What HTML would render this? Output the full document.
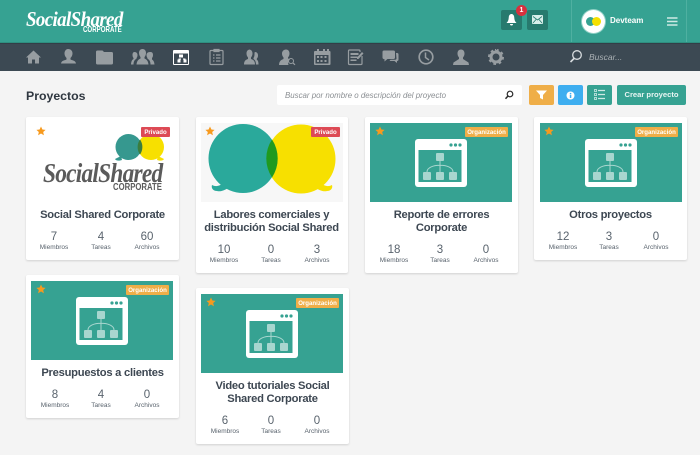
<!DOCTYPE html>
<html><head><meta charset="utf-8"><style>
html,body{margin:0;padding:0}
body{width:700px;height:455px;overflow:hidden;background:#f4f4f4;position:relative;font-family:"Liberation Sans",sans-serif;color:#3c4650}
.a{position:absolute}
.hdr{left:0;top:0;width:700px;height:43px;background:#36a292;border-bottom:1px solid #2f8f80;box-sizing:border-box}
.nav{left:0;top:43px;width:700px;height:28px;background:#3c4953;border-top:1px solid #333e47;box-sizing:border-box}
.card{position:absolute;background:#fff;border-radius:2px;box-shadow:0 1px 2px rgba(0,0,0,.14);width:153px}
.t{position:absolute;left:2px;width:149px;text-align:center;font-weight:bold;font-size:11.200px;letter-spacing:-.25px;line-height:13px;color:#3d4752;top:92px;white-space:nowrap}
.s{position:absolute;width:50px;text-align:center;margin-top:1px}
.s b{display:block;font-weight:normal;font-size:11.500px;line-height:13px;color:#59636d}
.s i{display:block;font-style:normal;font-size:6.500px;line-height:8px;color:#59636d}
.tag{position:absolute;height:10px;line-height:11px;font-size:6.100px;font-weight:bold;color:#fff;text-align:center;border-radius:1px;white-space:nowrap}
.pr{background:#dd4a55;width:29px}
.or{background:#efae48;width:43px}
.star{position:absolute}
.btn{position:absolute;top:85px;height:20px;border-radius:2px}
</style></head><body>
<svg width="0" height="0" style="position:absolute"><defs>
<symbol id="st" viewBox="0 0 20 20"><path fill="#f79a1e" d="M10 1l2.800 6 6.400.7-4.800 4.300 1.400 6.400L10 15.100l-5.800 3.300 1.400-6.400L.8 7.700 7.200 7z"/></symbol>
<symbol id="pj" viewBox="0 0 52 48"><rect x="0" y="0" width="52" height="48" rx="3" fill="#fff"/><rect x="3.500" y="11" width="43" height="32" fill="#36a292"/><circle cx="36" cy="6" r="1.600" fill="#36a292"/><circle cx="40.500" cy="6" r="1.600" fill="#36a292"/><circle cx="45" cy="6" r="1.600" fill="#36a292"/><path d="M25 22v11M12 33c0-9 26-9 26 0" fill="none" stroke="#a8d6cf" stroke-width="1"/><rect x="21" y="14" width="8" height="8" rx="1" fill="#a8d6cf"/><rect x="8" y="33" width="8" height="8" rx="1" fill="#a8d6cf"/><rect x="21" y="33" width="8" height="8" rx="1" fill="#a8d6cf"/><rect x="34" y="33" width="8" height="8" rx="1" fill="#a8d6cf"/></symbol>
<symbol id="pc" viewBox="0 0 142 79"><rect width="142" height="79" fill="#36a292"/><use href="#pj" x="45" y="16" width="52" height="48"/></symbol>
</defs></svg>

<div class="a hdr"></div>
<div class="a" style="left:26px;top:7px;font:italic bold 21.500px/24px 'Liberation Serif',serif;color:#fff;letter-spacing:-.7px;transform:scaleX(.88);transform-origin:left top;white-space:nowrap">SocialShared</div>
<div class="a" style="left:83px;top:25px;font:bold 8.300px/9px 'Liberation Sans',sans-serif;color:#fff;transform:scaleX(.74);transform-origin:left top;white-space:nowrap">CORPORATE</div>
<div class="a" style="left:501px;top:10px;width:21px;height:20px;background:#277a6e;border-radius:2px"></div>
<svg class="a" style="left:506px;top:14px" width="11" height="12" viewBox="0 0 11 12"><path fill="#fff" d="M5.500 0C7 0 8 1.200 8.200 3c.2 3 .8 4.500 2.300 6H.5C2 7.500 2.600 6 2.800 3 3 1.200 4 0 5.500 0zM4 10h3a1.500 1.500 0 0 1-3 0z"/></svg>
<div class="a" style="left:516px;top:5px;width:11px;height:11px;border-radius:50%;background:#d8303e;color:#fff;font:bold 7px/11px 'Liberation Sans',sans-serif;text-align:center">1</div>
<div class="a" style="left:527px;top:10px;width:21px;height:20px;background:#277a6e;border-radius:2px"></div>
<svg class="a" style="left:532px;top:15px" width="11" height="9" viewBox="0 0 11 9"><rect width="11" height="9" rx="1" fill="#d8efeb"/><path d="M1 1.500l4.500 3.500 4.500-3.500M1 8l3-3.500M10 8L7 4.500" fill="none" stroke="#277a6e" stroke-width=".8"/></svg>
<div class="a" style="left:571px;top:0;width:1px;height:42px;background:#4fb0a1"></div>
<div class="a" style="left:686px;top:0;width:1px;height:42px;background:#4fb0a1"></div>
<div class="a" style="left:582px;top:10px;width:23px;height:23px;border-radius:50%;background:#fff;box-shadow:0 0 0 1px #8fd0c5"></div>
<div class="a" style="left:586px;top:17px;width:9px;height:9px;border-radius:50%;background:#36a292"></div>
<div class="a" style="left:592px;top:17px;width:9px;height:9px;border-radius:50%;background:#f5e000"></div>
<div class="a" style="left:610px;top:15px;font:bold 8px/12px 'Liberation Sans',sans-serif;color:#fff">Devteam</div>
<svg class="a" style="left:667px;top:17px" width="11" height="9"><path d="M0 1h10.500M0 4.500h10.500M0 8h10.500" stroke="#cfe9e4" stroke-width="1.400"/></svg>

<div class="a nav"></div>
<svg class="a" style="left:0;top:44px" width="700" height="27" viewBox="0 44 700 27" fill="#979da1">
<path d="M26 57.500l7.500-7 7.500 7h-2v6h-4v-4h-3v4h-4v-6z"/>
<path d="M68 49c3 0 4.500 2 4.500 4.500 0 2-1 3.500-2 4.500v1.500c2 1 5 1 5.500 4H61c.5-3 3.500-3 5.500-4V58c-1-1-2-2.500-2-4.500C64.500 51 66 49 68 49z"/>
<path d="M96 52q0-1.500 1.500-1.500h5l1.500 1.500h7.500q1.500 0 1.500 1.500V63q0 1.500-1.500 1.500h-14q-1.500 0-1.500-1.500z"/>
<path d="M142.500 49c2.500 0 3.500 2 3.500 4s-1 3.500-1.500 4v1.500c2 1 3.500 2 4 6h-12c.5-4 2-5 4-6V57c-.5-.5-1.500-2-1.500-4s1-4 3.500-4zM134.500 52c2 0 3 1.500 3 3s-.5 2.500-1 3v.8l-1.500 1c-.8 1-1.500 2.500-1.500 4.700H131c.2-3 1-4.800 2.500-5.500V58c-.5-.5-1-1.500-1-3s.5-3 2-3zM150.500 52c2 0 2.500 1.500 2.500 3s-.5 2.500-1 3v1.500c1.500.7 2.300 2.500 2.500 5h-4c0-2.200-.7-3.700-1.500-4.700l-1.500-1V58c-.5-.5-1-1.500-1-3s1-3 3.500-3z"/>
<path fill="none" stroke="#979da1" stroke-width="1.200" d="M211 50.500h11a1 1 0 0 1 1 1v12a1 1 0 0 1-1 1h-11a1 1 0 0 1-1-1v-12a1 1 0 0 1 1-1zM214 49.500h5v2h-5zM213 55h1.500M216 55h4.500M213 58h1.500M216 58h4.500M213 61h1.500M216 61h4.500"/>
<path d="M249 49.500c2.500 0 3.500 2 3.500 4s-.8 3-1.500 4v1.500c2 .8 4 1.500 4 5.500h-11c0-4 2-4.700 4-5.500v-1.500c-.7-1-1.500-2-1.500-4s1-4 3.500-4zM255 52c2 0 3 1.500 3 3.500s-.8 2.500-1.200 3.200v1c1 .5 1.700 1.500 1.700 4.800H256c0-3-1-4.500-2.500-5.500v-1c.6-1 1-2 1-3.500 0-1 0-2.500.5-2.500z"/>
<path d="M286 49.500c2.500 0 3.500 2 3.500 4s-.8 3-1.500 4v1c1 .4 1.500.7 2 1a5 5 0 0 0-1.500 5.500H279c.2-4 2-5 4.500-6v-1.500c-.7-1-1.500-2-1.500-4s1.500-4 4-4z"/>
<circle cx="291" cy="61" r="2.500" fill="none" stroke="#979da1" stroke-width="1"/><path d="M293 63l2 1.800" stroke="#979da1" stroke-width="1.200"/>
<path fill-rule="evenodd" d="M315 51h2v-2h2v2h4v-2h2v2h2v-2h2v2h.5a1 1 0 0 1 1 1v12a1 1 0 0 1-1 1H315a1 1 0 0 1-1-1V52a1 1 0 0 1 1-1zM315.500 55v8.500h13V55zM317 56h2v2h-2zM320.500 56h2v2h-2zM324.500 56h2v2h-2zM317 60h2v2h-2zM320.500 60h2v2h-2zM324.500 60h2v2h-2z"/>
<path fill="none" stroke="#979da1" stroke-width="1.200" d="M360 52v-1a1 1 0 0 0-1-1h-9.500a1 1 0 0 0-1 1v12.500a1 1 0 0 0 1 1H361a1 1 0 0 0 1-1V56"/>
<path d="M350.500 53h8v2h-8zM350.500 56.500h7v1.500h-7zM350.500 59.500h6v1.500h-6zM362 52l1.500 1.500-5 5.500h-1.500v-1.500z"/>
<path d="M384 50.500h9.500a1.500 1.500 0 0 1 1.500 1.500v5.500a1.500 1.500 0 0 1-1.500 1.500h-6l-3 2.500V59a1.500 1.500 0 0 1-2-1.500V52a1.500 1.500 0 0 1 1.500-1.500z"/>
<path d="M396 53h1a1.500 1.500 0 0 1 1.500 1.500v5a1.500 1.500 0 0 1-1.500 1.500v2l-2.500-2h-5l1-1.200h5a1.500 1.500 0 0 0 1-1.300z"/>
<circle cx="426" cy="57" r="6.800" fill="none" stroke="#979da1" stroke-width="1.700"/><path d="M425.500 52.500v5l3.500 2.500" fill="none" stroke="#979da1" stroke-width="1.500"/>
<path d="M461 49.500c2.500 0 3.500 2 3.500 4s-.8 3-1.500 4v1.500l5.500 3.500.5 2.500h-16l.5-2.500 5.500-3.500v-1.500c-.7-1-1.500-2-1.500-4s1-4 3.500-4z"/>
<circle cx="496" cy="57" r="5" fill="none" stroke="#979da1" stroke-width="3"/><circle cx="496" cy="57" r="7" fill="none" stroke="#979da1" stroke-width="2" pathLength="16" stroke-dasharray="1 1"/>
<rect x="173" y="50" width="16" height="15" rx="1" fill="#fff"/><rect x="174" y="53.500" width="14" height="10.500" fill="#3c4953"/><path d="M179 54.500h4v3h-1.500v1h4v1h1v3h-3v-3h-.5v-1h-2v1h-.5v3h-3v-3h1v-1h3v-1H179z" fill="#fff"/>
<circle cx="577" cy="55" r="4.300" fill="none" stroke="#d8dcdf" stroke-width="1.300"/><path d="M574 58.500l-3.500 3.500" stroke="#d8dcdf" stroke-width="1.600"/>
</svg>
<div class="a" style="left:589px;top:51px;font:italic 8.500px/12px 'Liberation Sans',sans-serif;color:#aab0b4">Buscar...</div>

<div class="a" style="left:26px;top:88px;font:bold 12.300px/16px 'Liberation Sans',sans-serif;color:#2f3740">Proyectos</div>
<div class="a" style="left:277px;top:85px;width:245px;height:20px;background:#fff;border-radius:2px"></div>
<div class="a" style="left:285px;top:90px;font:italic 7.900px/11px 'Liberation Sans',sans-serif;color:#8b8f93">Buscar por nombre o descripción del proyecto</div>
<svg class="a" style="left:504px;top:90px" width="10" height="10"><circle cx="6" cy="4" r="2.800" fill="none" stroke="#2b2b2b" stroke-width="1.200"/><path d="M4 6L1.500 8.700" stroke="#2b2b2b" stroke-width="1.500"/></svg>
<div class="btn" style="left:529px;width:25px;background:#efae48"></div>
<svg class="a" style="left:536px;top:90px" width="11" height="10"><path d="M0 .5h11L7 5v4.500L4 8V5z" fill="#fff"/></svg>
<div class="btn" style="left:558px;width:25px;background:#3eaef0"></div>
<svg class="a" style="left:566px;top:91px" width="9" height="9"><circle cx="4.500" cy="4.500" r="4" fill="#fff"/><rect x="3.800" y="3.700" width="1.500" height="3.300" fill="#3eaef0"/><rect x="3.800" y="1.900" width="1.500" height="1.200" fill="#3eaef0"/></svg>
<div class="btn" style="left:587px;width:25px;background:#36a292"></div>
<svg class="a" style="left:594px;top:89px" width="11" height="12"><path d="M4 1.500h7M4 5.500h7M4 9.500h7" stroke="#cfe9e4" stroke-width="1.200"/><rect x=".5" y=".5" width="2" height="2" fill="none" stroke="#cfe9e4" stroke-width=".8"/><rect x=".5" y="4.500" width="2" height="2" fill="none" stroke="#cfe9e4" stroke-width=".8"/><rect x=".5" y="8.500" width="2" height="2" fill="none" stroke="#cfe9e4" stroke-width=".8"/></svg>
<div class="btn" style="left:617px;width:69px;background:#36a292;color:#e8f5f3;font:bold 7.600px/20px 'Liberation Sans',sans-serif;text-align:center">Crear proyecto</div>

<!-- 1 -->
<div class="card" style="left:26px;top:117px;height:143px">
<svg class="a" style="left:0;top:0" width="153" height="60" viewBox="26 117 153 60"><circle cx="151" cy="147" r="13" fill="#f7e000"/><path d="M158 156l6 3c-1 2-4 2-7 1z" fill="#f7e000"/><circle cx="128.500" cy="147" r="13" fill="#36988f"/><path d="M121 156l-6 3c1 2 4 2 7 1z" fill="#36988f"/><path d="M140 139.500a13 13 0 0 1 0 15 13 13 0 0 1 0-15z" fill="#3a7d3e"/></svg>
<div class="a" style="left:17px;top:40px;font:italic bold 27.500px/32px 'Liberation Serif',serif;color:#5b5b5b;letter-spacing:-.9px;white-space:nowrap;transform:scaleX(.85);transform-origin:left top">SocialShared</div>
<div class="a" style="left:87px;top:65px;font:bold 9.800px/11px 'Liberation Sans',sans-serif;color:#5b5b5b;white-space:nowrap;transform:scaleX(.79);transform-origin:left top">CORPORATE</div>
<svg class="star" width="10" height="10" style="left:10px;top:9px"><use href="#st"/></svg>
<div class="tag pr" style="top:10px;right:9px">Privado</div>
<div class="t">Social Shared Corporate</div>
<div class="s" style="left:3px;top:113px"><b>7</b><i>Miembros</i></div>
<div class="s" style="left:50px;top:113px"><b>4</b><i>Tareas</i></div>
<div class="s" style="left:96px;top:113px"><b>60</b><i>Archivos</i></div>
</div>

<!-- 2 -->
<div class="card" style="left:196px;top:117px;height:156px;width:152px">
<div class="a" style="left:5px;top:6px;width:142px;height:79px;background:#f7f7f7"></div>
<svg class="a" style="left:0;top:0" width="152" height="90" viewBox="196 117 152 90"><circle cx="301" cy="159" r="34.500" fill="#f7e000"/><path d="M322 184c3 2 6 3 10 1 1 3-1 6-5 6-4 1-8-1-11-3z" fill="#f7e000"/><circle cx="243" cy="158.500" r="34.500" fill="#2aa99b"/><path d="M222 184c-3 2-6 3-10 1-1 3 1 6 5 6 4 1 8-1 11-3z" fill="#2aa99b"/><path d="M272 139.500a34.500 34.500 0 0 1 0 38 34.500 34.500 0 0 1 0-38z" fill="#1f9a1f"/></svg>
<svg class="star" width="10" height="10" style="left:9px;top:9px"><use href="#st"/></svg>
<div class="tag pr" style="top:10px;right:8px">Privado</div>
<div class="t" style="left:1px">Labores comerciales y<br>distribución Social Shared</div>
<div class="s" style="left:3px;top:126px"><b>10</b><i>Miembros</i></div>
<div class="s" style="left:50px;top:126px"><b>0</b><i>Tareas</i></div>
<div class="s" style="left:96px;top:126px"><b>3</b><i>Archivos</i></div>
</div>

<!-- 3 -->
<div class="card" style="left:365px;top:117px;height:156px">
<svg class="a" style="left:5px;top:6px" width="142" height="79"><use href="#pc"/></svg>
<svg class="star" width="10" height="10" style="left:10px;top:9px"><use href="#st"/></svg>
<div class="tag or" style="top:10px;right:10px">Organización</div>
<div class="t">Reporte de errores<br>Corporate</div>
<div class="s" style="left:4px;top:126px"><b>18</b><i>Miembros</i></div>
<div class="s" style="left:50px;top:126px"><b>3</b><i>Tareas</i></div>
<div class="s" style="left:96px;top:126px"><b>0</b><i>Archivos</i></div>
</div>

<!-- 4 -->
<div class="card" style="left:534px;top:117px;height:143px">
<svg class="a" style="left:6px;top:6px" width="142" height="79"><use href="#pc"/></svg>
<svg class="star" width="10" height="10" style="left:10px;top:9px"><use href="#st"/></svg>
<div class="tag or" style="top:10px;right:9px">Organización</div>
<div class="t">Otros proyectos</div>
<div class="s" style="left:4px;top:113px"><b>12</b><i>Miembros</i></div>
<div class="s" style="left:50px;top:113px"><b>3</b><i>Tareas</i></div>
<div class="s" style="left:97px;top:113px"><b>0</b><i>Archivos</i></div>
</div>

<!-- 5 -->
<div class="card" style="left:26px;top:275px;height:143px">
<svg class="a" style="left:5px;top:6px" width="142" height="79"><use href="#pc"/></svg>
<svg class="star" width="10" height="10" style="left:10px;top:9px"><use href="#st"/></svg>
<div class="tag or" style="top:10px;right:10px">Organización</div>
<div class="t">Presupuestos a clientes</div>
<div class="s" style="left:4px;top:113px"><b>8</b><i>Miembros</i></div>
<div class="s" style="left:50px;top:113px"><b>4</b><i>Tareas</i></div>
<div class="s" style="left:96px;top:113px"><b>0</b><i>Archivos</i></div>
</div>

<!-- 6 -->
<div class="card" style="left:196px;top:288px;height:156px">
<svg class="a" style="left:5px;top:6px" width="142" height="79"><use href="#pc"/></svg>
<svg class="star" width="10" height="10" style="left:10px;top:9px"><use href="#st"/></svg>
<div class="tag or" style="top:10px;right:10px">Organización</div>
<div class="t">Video tutoriales Social<br>Shared Corporate</div>
<div class="s" style="left:4px;top:126px"><b>6</b><i>Miembros</i></div>
<div class="s" style="left:50px;top:126px"><b>0</b><i>Tareas</i></div>
<div class="s" style="left:96px;top:126px"><b>0</b><i>Archivos</i></div>
</div>
</body></html>
